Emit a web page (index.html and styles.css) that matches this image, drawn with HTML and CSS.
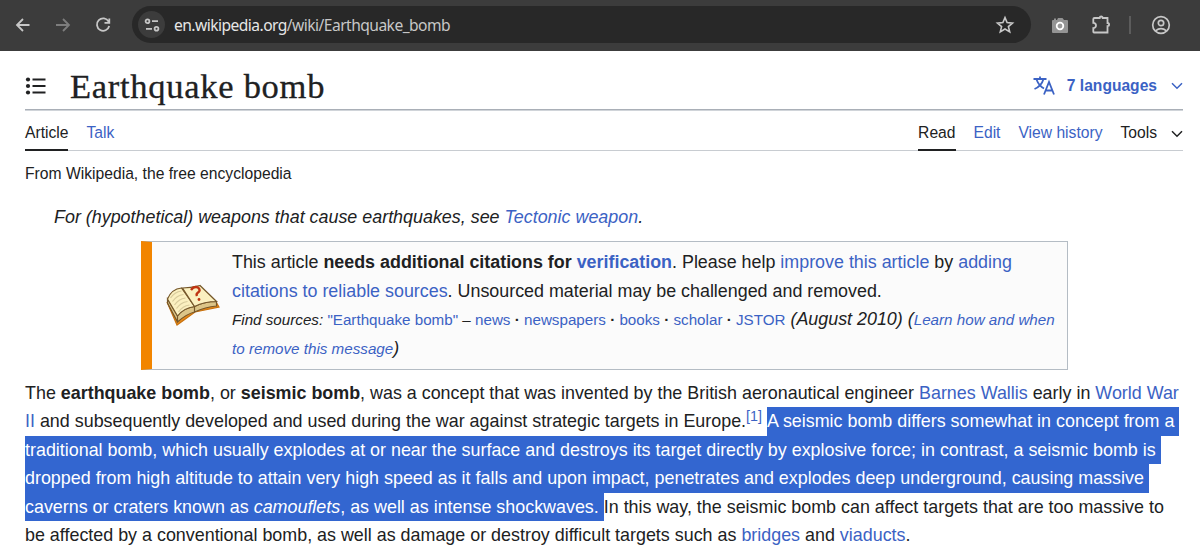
FILE: index.html
```html
<!DOCTYPE html>
<html lang="en">
<head>
  <meta charset="UTF-8">
  <title>Earthquake bomb - Wikipedia</title>
  <link rel="stylesheet" href="styles.css">
</head>
<body>
  <div class="toolbar">
    <svg class="nav-icon" viewBox="0 0 20 20"><path d="M16.5 10H4M10 4L4 10l6 6"/></svg>
    <svg class="nav-icon disabled" viewBox="0 0 20 20"><path d="M3 10h13M10 4l6 6-6 6"/></svg>
    <svg class="nav-icon" viewBox="0 0 20 20"><path d="M15.6 6.6A6.2 6.2 0 1 0 16.2 11M16.3 3.6v4.2H11.5"/></svg>
    <div class="omnibox">
      <span class="site-info">
        <svg viewBox="0 0 16 16" width="16" height="16"><circle cx="3.5" cy="4.2" r="1.9"/><path d="M8 4.2h6M2 11.8h6"/><circle cx="12.5" cy="11.8" r="1.9"/></svg>
      </span>
      <span class="url">en.wikipedia.org<span>/wiki/Earthquake_bomb</span></span>
      <svg class="star" viewBox="0 0 20 20"><path d="M10 2.6l2.1 5 5.4.5-4.1 3.5 1.3 5.3-4.7-2.9-4.7 2.9 1.3-5.3-4.1-3.5 5.4-.5z"/></svg>
    </div>
    <svg class="camera" viewBox="0 0 18 18"><path d="M2 4h1V2.5h2V4h1L7 2h4.5L13 4h3q1 0 1 1V16q0 1-1 1H2q-1 0-1-1V5q0-1 1-1z"/><circle cx="9" cy="10" r="3.3"/></svg>
    <svg class="puzzle" viewBox="0 0 20 20"><path d="M3.500 3h5.200a1.500 1.500 0 0 1 3 0H16.500v5a1.600 1.600 0 0 1 0 3.200V17.500H3q-.7 0-.7-.7v-3.600a2.700 2.700 0 0 0 0-5.400V4q0-1 1.200-1z"/></svg>
    <span class="divider"></span>
    <svg class="profile" viewBox="0 0 20 20"><circle cx="10" cy="10" r="8.3"/><circle cx="10" cy="8" r="2.7"/><path d="M4.5 15.8q5.5-4.3 11 0"/></svg>
  </div>

  <div class="page">
    <header class="title-bar">
      <svg class="toc" viewBox="0 0 22 20"><path d="M7.5 3.5H20.5M7.5 10H20.5M7.5 16.5H20.5"/><circle cx="3" cy="3.5" r="2.1"/><circle cx="3" cy="10" r="2.1"/><circle cx="3" cy="16.5" r="2.1"/></svg>
      <h1>Earthquake bomb</h1>
      <a class="languages">
        <svg class="lang-icon" viewBox="0 0 22 20"><path d="M.5 3h13M7 .5V3M10.5 3Q8.5 10 1.5 13M3.5 3.5Q6 10 11 12.5"/><path d="M11 18.5l5-12.5 5 12.5M12.7 14.5h6.6"/></svg>
        <span>7 languages</span>
        <svg class="chevron" viewBox="0 0 12 8"><path d="M1 1.3l5 5 5-5"/></svg>
      </a>
    </header>

    <nav class="tabs">
      <a class="selected">Article</a>
      <a>Talk</a>
      <a class="selected read">Read</a>
      <a>Edit</a>
      <a>View history</a>
      <a class="tools">Tools<svg class="chevron" viewBox="0 0 12 8"><path d="M1 1.3l5 5 5-5"/></svg></a>
    </nav>

    <div class="sub">From Wikipedia, the free encyclopedia</div>
    <div class="hatnote">For (hypothetical) weapons that cause earthquakes, see <a>Tectonic weapon</a>.</div>

    <div class="ambox">
      <svg class="book" viewBox="0 0 54 44">
        <path class="cover" d="M1 18L11 41l18-13 24-5-3-5-20 5-18 12z"/>
        <path class="edge" d="M1.500 15L11.500 32v6L1.500 19zM11.500 32q6-8 17-9.500v5.500q-8 2-17 10zM28.500 22.500q10-5 22-5v4.500q-11 1-22 6z"/>
        <path class="paper" d="M1.500 15q4-10 14-11L28.500 22.500q-11 1.500-17 9.500z"/>
        <path class="paper" d="M16.500 4Q24 4 34 1.500l16.500 16q-12 0-22 5z"/>
        <path class="rule" d="M4.500 14q4-6 11-7M6.500 17.500q4-6 11-7M8.500 21q4-6 11-7M10.500 24.500q4-6 11-7M12.500 28q4-6 11-7"/>
        <path class="question" d="M25 6q3-4 7-2.500 3.500 3-.5 5.500-1.500 1-.5 3"/>
        <circle cx="33" cy="15.500" r="1.400"/>
      </svg>
      <div class="ambox-text">
        <p>This article <b>needs additional citations for <a>verification</a></b>. Please help <a>improve this article</a> by <a>adding</a></p>
        <p><a>citations to reliable sources</a>. Unsourced material may be challenged and removed.</p>
        <p class="sources"><small><i>Find sources:</i> <a>"Earthquake bomb"</a> – <a>news</a> <b>·</b> <a>newspapers</a> <b>·</b> <a>books</a> <b>·</b> <a>scholar</a> <b>·</b> <a>JSTOR</a></small> <i>(August 2010) (<a class="small">Learn how and when</a></i></p>
        <p><i><a class="small">to remove this message</a>)</i></p>
      </div>
    </div>

    <div class="article">
      <p>The <b>earthquake bomb</b>, or <b>seismic bomb</b>, was a concept that was invented by the British aeronautical engineer <a>Barnes Wallis</a> early in <a>World War</a></p>
      <p><a>II</a> and subsequently developed and used during the war against strategic targets in Europe.<sup><a>[1]</a></sup> <mark>A seismic bomb differs somewhat in concept from a </mark></p>
      <p><mark>traditional bomb, which usually explodes at or near the surface and destroys its target directly by explosive force; in contrast, a seismic bomb is </mark></p>
      <p><mark>dropped from high altitude to attain very high speed as it falls and upon impact, penetrates and explodes deep underground, causing massive </mark></p>
      <p><mark>caverns or craters known as <i>camouflets</i>, as well as intense shockwaves. </mark>In this way, the seismic bomb can affect targets that are too massive to</p>
      <p>be affected by a conventional bomb, as well as damage or destroy difficult targets such as <a>bridges</a> and <a>viaducts</a>.</p>
    </div>
  </div>
</body>
</html>
```
FILE: styles.css
```css
* {
  box-sizing: border-box;
}

body {
  margin: 0;
  background: #fff;
  color: #202122;
  font-family: "Liberation Sans", Arial, sans-serif;
  overflow: hidden;
}

svg {
  flex: none;
  fill: none;
  stroke: currentColor;
}

a {
  color: #3b62c4;
}

p {
  margin: 0;
}

/* browser toolbar */
.toolbar {
  display: flex;
  align-items: center;
  height: 51px;
  padding: 0 29px 2px 13px;
  background: #3c3c3c;
  color: #c7c7c7;
}

.nav-icon {
  width: 20px;
  height: 20px;
  margin-right: 20px;
  stroke-width: 1.8;
}

.nav-icon.disabled {
  color: #7d7d7d;
}

.omnibox {
  display: flex;
  align-items: center;
  width: 900px;
  height: 37px;
  margin-left: -1px;
  padding: 0 16px 0 6px;
  border-radius: 19px;
  background: #282828;
}

.site-info {
  display: flex;
  align-items: center;
  justify-content: center;
  width: 27px;
  height: 27px;
  border-radius: 50%;
  background: #3c3c3c;
  stroke-width: 1.8;
}

.url {
  flex: 1;
  margin-left: 9px;
  font-family: "Noto Sans", sans-serif;
  font-size: 15.6px;
  color: #e6e6e6;
  letter-spacing: -0.54px;
}

.url span {
  color: #c7c7c7;
}

.star {
  width: 20px;
  height: 20px;
  stroke-width: 1.6;
}

.camera {
  width: 18px;
  height: 18px;
  margin-left: 20px;
  fill: #949494;
  stroke: none;
}

.camera circle {
  fill: #999;
  stroke: #fff;
  stroke-width: 1.8;
}

.puzzle {
  width: 20px;
  height: 20px;
  margin-left: 22px;
  stroke-width: 1.8;
}

.divider {
  width: 2px;
  height: 18px;
  margin: 0 20px 0 18px;
  background: #5c5c5c;
}

.profile {
  width: 20px;
  height: 20px;
  stroke-width: 1.7;
}

/* page heading */
.page {
  padding: 0 17px 0 25px;
}

.title-bar {
  display: flex;
  align-items: center;
  height: 59px;
  padding-top: 11px;
  border-bottom: 1px solid #a9afb7;
  box-shadow: 0 1px 0 #d0d4d9;
}

.toc {
  width: 22px;
  height: 20px;
  stroke-width: 2;
}

.toc circle {
  fill: currentColor;
  stroke: none;
}

h1 {
  flex: 1;
  margin: 0 0 0 23px;
  font-family: Georgia, "Liberation Serif", serif;
  font-size: 34.5px;
  font-weight: normal;
  letter-spacing: 0.72px;
  line-height: 40px;
  -webkit-text-stroke: 0.3px #202122;
}

.languages {
  display: flex;
  align-items: center;
  font-size: 15.6px;
  font-weight: bold;
}

.lang-icon {
  width: 22px;
  height: 20px;
  margin-right: 12px;
  stroke-width: 1.8;
}

.chevron {
  width: 12px;
  height: 8px;
  margin-left: 14px;
  stroke-width: 1.5;
}

.tabs {
  display: flex;
  height: 41px;
  border-bottom: 1px solid #c8ccd1;
  font-size: 15.65px;
}

.tabs a {
  height: 41px;
  margin-right: 18px;
  padding-top: 14px;
  line-height: 18px;
}

.tabs .selected,
.tabs .tools {
  color: #202122;
}

.tabs .selected {
  border-bottom: 2px solid #202122;
}

.tabs .read {
  margin-left: auto;
}

.tabs .tools {
  margin-right: 0;
}

.sub {
  margin-top: 13px;
  font-size: 15.68px;
  line-height: 20px;
}

.hatnote {
  margin: 19px 0 9px 29px;
  font-size: 17.9px;
  font-style: italic;
  line-height: 29px;
}

/* citation notice */
.ambox {
  display: flex;
  align-items: center;
  width: 927px;
  height: 129px;
  margin-left: 115.5px;
  padding-left: 14px;
  border: 1px solid #b4bcc4;
  border-left: 11px solid #f28500;
  background: #fbfbfb;
}

.book {
  width: 54px;
  height: 44px;
  margin-right: 12.5px;
  stroke-width: 1.2;
}

.cover {
  fill: #e98a18;
  stroke: #c8720f;
}

.edge {
  fill: #dcc588;
  stroke: #75572a;
}

.paper {
  fill: #fbf0c0;
  stroke: #75572a;
}

.rule {
  stroke: #d8cb9c;
}

.question {
  stroke: #bf3412;
  stroke-width: 2.4;
}

.book circle {
  fill: #bf3412;
  stroke: none;
}

.ambox-text {
  font-size: 17.89px;
  line-height: 28.7px;
  white-space: nowrap;
}

.ambox-text p {
  height: 28.7px;
}

.ambox-text .sources {
  line-height: 27px;
}

small,
.small {
  font-size: 15.2px;
  line-height: 1;
}

/* article body */
.article {
  margin-top: 8.5px;
  font-size: 17.905px;
  line-height: 28.6px;
  white-space: nowrap;
}

.article p {
  height: 28.6px;
}

sup {
  font-size: 14.3px;
  line-height: 1;
  vertical-align: 6px;
}

mark {
  display: inline-block;
  height: 28.6px;
  background: #3366d0;
  color: #fff;
  white-space: pre;
}
```
